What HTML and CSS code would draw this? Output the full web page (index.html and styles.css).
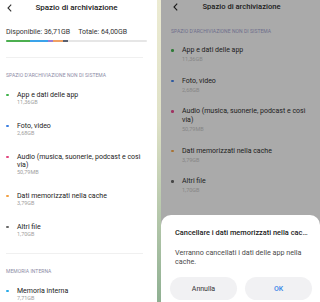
FILE: index.html
```html
<!DOCTYPE html>
<html lang="it">
<head>
<meta charset="utf-8">
<title>Spazio di archiviazione</title>
<link rel="stylesheet" href="styles.css">
</head>
<body>
<section class="panel left">
  <header class="bar">
    <svg class="back" viewBox="0 0 5 8"><path d="M4.2 0.6 L1 4 L4.2 7.4" fill="none" stroke="currentColor" stroke-width="1.1"/></svg>
    <h1>Spazio di archiviazione</h1>
  </header>
  <div class="totals"><span>Disponibile: 36,71GB</span><span>Totale: 64,00GB</span></div>
  <div class="usage">
    <span class="seg s-green" style="width:24px"></span>
    <span class="seg s-blue" style="width:18px"></span>
    <span class="seg s-purple" style="width:5px"></span>
    <span class="seg s-orange" style="width:10px"></span>
    <span class="seg s-dark" style="width:5px"></span>
  </div>
  <hr class="rule first">
  <h2>SPAZIO D'ARCHIVIAZIONE NON DI SISTEMA</h2>
  <ul class="items">
    <li><i class="dot green"></i><div><div class="name">App e dati delle app</div><div class="size">11,36GB</div></div></li>
    <li><i class="dot blue"></i><div><div class="name">Foto, video</div><div class="size">2,68GB</div></div></li>
    <li><i class="dot pink"></i><div><div class="name">Audio (musica, suonerie, podcast e così via)</div><div class="size">50,79MB</div></div></li>
    <li><i class="dot orange"></i><div><div class="name">Dati memorizzati nella cache</div><div class="size">3,79GB</div></div></li>
    <li><i class="dot gray"></i><div><div class="name">Altri file</div><div class="size">1,70GB</div></div></li>
  </ul>
  <hr class="rule second">
  <h2>MEMORIA INTERNA</h2>
  <ul class="items">
    <li><i class="dot cyan"></i><div><div class="name">Memoria interna</div><div class="size">7,71GB</div></div></li>
  </ul>
</section>
<div class="seam"></div>
<section class="panel right">
  <header class="bar">
    <svg class="back" viewBox="0 0 5 8"><path d="M4.2 0.6 L1 4 L4.2 7.4" fill="none" stroke="currentColor" stroke-width="1.1"/></svg>
    <h1>Spazio di archiviazione</h1>
  </header>
  <h2>SPAZIO D'ARCHIVIAZIONE NON DI SISTEMA</h2>
  <ul class="items">
    <li><i class="dot green"></i><div><div class="name">App e dati delle app</div><div class="size">11,36GB</div></div></li>
    <li><i class="dot blue"></i><div><div class="name">Foto, video</div><div class="size">2,68GB</div></div></li>
    <li><i class="dot pink"></i><div><div class="name">Audio (musica, suonerie, podcast e così via)</div><div class="size">50,79MB</div></div></li>
    <li><i class="dot orange"></i><div><div class="name">Dati memorizzati nella cache</div><div class="size">3,79GB</div></div></li>
    <li><i class="dot gray"></i><div><div class="name">Altri file</div><div class="size">1,70GB</div></div></li>
  </ul>
  <div class="dialog">
    <h3>Cancellare i dati memorizzati nella cache?</h3>
    <p>Verranno cancellati i dati delle app nella cache.</p>
    <div class="actions">
      <button class="btn">Annulla</button>
      <button class="btn ok">OK</button>
    </div>
  </div>
</section>
</body>
</html>
```
FILE: styles.css
```css
* { box-sizing: border-box; margin: 0; padding: 0; }
html, body { width: 320px; height: 302px; overflow: hidden; }
body {
  font-family: Roboto, "Noto Sans", sans-serif;
  display: flex;
  background: #fff;
  color: #222;
}
.panel { height: 302px; overflow: hidden; }
.left { width: 157px; background: #fff; padding: 0 10px 0 6px; }
.seam { width: 4px; background: linear-gradient(#ecebd2, #dfe1c6 40%, #8fb092); }
.right { flex: 1; background: #aaaaaa; position: relative; padding: 0 8px 0 10px; color: #1a1a1a; }

.bar { height: 16px; display: grid; grid-template-columns: 1fr auto 1fr; align-items: center; }
.back { width: 5px; height: 8px; margin-left: 1px; color: #333; }
.bar h1 { font-size: 8px; font-weight: 500; line-height: 16px; color: #1a1a1a; }
.right .bar { height: 14px; }
.right .back { margin-left: 2px; color: #1a1a1a; }
.right .bar h1 { font-size: 7.6px; line-height: 14px; }

.totals { margin-top: 12px; display: flex; gap: 8px; font-size: 7px; line-height: 8px; color: #333; }
.usage { margin-top: 4px; height: 2px; display: flex; background: #e6e6e6; border-radius: 1px; overflow: hidden; }
.seg { height: 2px; }
.s-green { background: #4caf50; }
.s-blue { background: #3aa3ea; }
.s-purple { background: #9a7cd4; }
.s-orange { background: #f0a062; }
.s-dark { background: #5a6070; }

.rule { border: none; height: 1px; background: #f0f0f0; margin-right: 4px; }
.rule.first { margin-top: 15px; }
.rule.second { margin-top: 7px; }

h2 { font-size: 5px; font-weight: 400; line-height: 7px; color: #8d8ca6; margin: 14px 0 4px; letter-spacing: 0.05px; }
.right h2 { margin: 13.5px 0 4.5px; color: #6e6e8c; }

.items { list-style: none; }
.items li { display: grid; grid-template-columns: 11px 1fr; align-items: start; padding: 8px 0; }
.dot { display: block; align-self: start; width: 2.5px; height: 2.5px; border-radius: 50%; margin-top: 2.75px; }
.name { font-size: 7px; line-height: 8px; color: #222; }
.size { font-size: 5.5px; line-height: 7px; color: #a0a0a0; }
.green { background: #3fb24a; }
.blue { background: #3b7fe0; }
.pink { background: #e2457e; }
.orange { background: #f2a043; }
.gray { background: #666; }
.cyan { background: #29abe8; }

.right .items li { padding: 7px 0 6.5px; }
.right .name { line-height: 9px; color: #1c1c1c; }
.right .size { line-height: 8px; color: #858585; }
.right .dot { margin-top: 3.25px; }
.right .green { background: #2e7a36; }
.right .blue { background: #2c58a0; }
.right .pink { background: #a03262; }
.right .orange { background: #a87232; }
.right .gray { background: #474747; }

.dialog {
  position: absolute; left: 0; right: 0; bottom: 0; height: 87px;
  background: #fff; border-radius: 10px 10px 0 0;
  padding: 12.5px 8px 0 9px;
}
.dialog h3 {
  font-size: 7.4px; font-weight: 500; line-height: 9px; color: #1a1a1a;
  padding: 0 4px 0 5px; white-space: nowrap; overflow: hidden; text-overflow: ellipsis;
}
.dialog p { font-size: 7.2px; line-height: 9px; margin-top: 11px; padding: 0 4px 0 5px; color: #4a4a4a; }
.actions { display: grid; grid-template-columns: 1fr 1fr; gap: 8px; margin-top: 11.5px; }
.btn {
  height: 23px; border: none; border-radius: 12px; background: #f1f1f3;
  font-family: inherit; font-size: 7px; color: #333;
}
.btn.ok { color: #3a86e8; font-weight: 500; }
```
